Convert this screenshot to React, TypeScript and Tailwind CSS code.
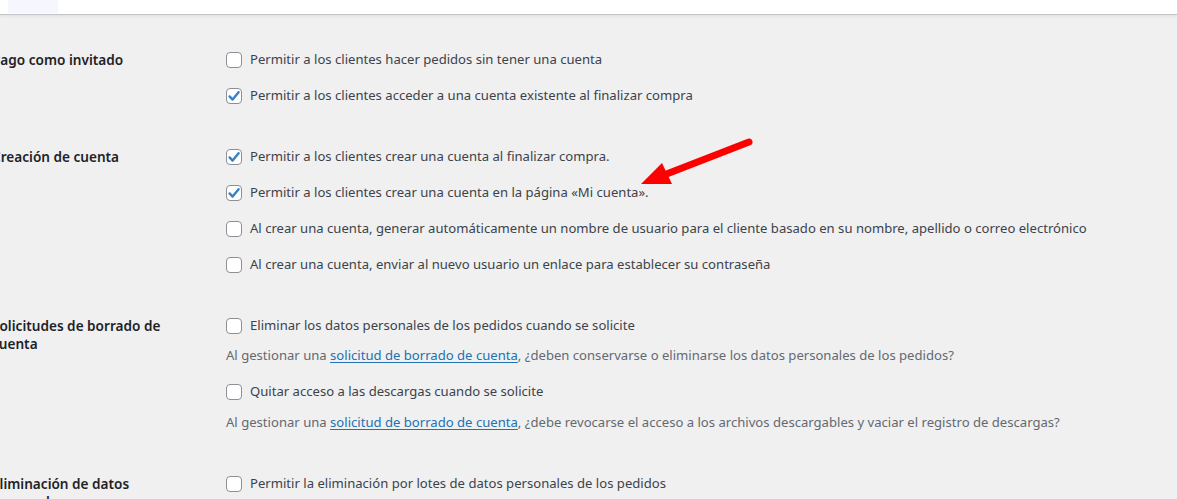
import type { ReactNode } from 'react'

function Checkbox({ checked }: { checked?: boolean }) {
  return (
    <span className="relative flex h-4 w-4 shrink-0 items-center justify-center rounded-[4px] border border-[#8c8f94] bg-white">
      {checked && (
        <svg className="absolute -left-px -top-px h-4 w-4" viewBox="0 0 16 16" aria-hidden="true">
          <path
            d="M3.6 8.4 L6.6 11.6 L12.6 4.2"
            fill="none"
            stroke="#3582c4"
            strokeWidth="2.4"
            strokeLinecap="round"
            strokeLinejoin="round"
          />
        </svg>
      )}
    </span>
  )
}

function Option({ checked, children }: { checked?: boolean; children: ReactNode }) {
  return (
    <label className="flex h-5 items-center gap-2 text-[#3c434a]">
      <Checkbox checked={checked} />
      <span className="whitespace-nowrap">{children}</span>
    </label>
  )
}

function Description({ children }: { children: ReactNode }) {
  return <p className="flex h-5 items-center whitespace-nowrap text-[#646970]">{children}</p>
}

function SettingRow({ label, children }: { label: string; children: ReactNode }) {
  return (
    <div className="flex">
      <div className="w-[234px] shrink-0 pr-[34px] pt-px text-[13.6px] font-semibold leading-[18px] text-[#1d2327]">
        {label}
      </div>
      <div className="flex flex-col">{children}</div>
    </div>
  )
}

const link = 'text-[#2271b1] underline underline-offset-2'

export default function App() {
  return (
    <div className="h-[499px] w-[1177px] overflow-hidden bg-[#f0f0f1] text-[13.1px] font-['Noto_Sans',sans-serif]">
      <div className="relative h-[15px] border-b border-[#c3c4c7] bg-white shadow-[0_1px_3px_rgba(0,0,0,0.08)]">
        <div className="ml-2 h-[13px] w-[50px] bg-[#f6f7fe]" />
      </div>

      <div className="relative -ml-2 flex flex-col gap-[41px] pt-[35px]">
        <SettingRow label="Pago como invitado">
          <div className="flex flex-col gap-4">
            <Option>Permitir a los clientes hacer pedidos sin tener una cuenta</Option>
            <Option checked>Permitir a los clientes acceder a una cuenta existente al finalizar compra</Option>
          </div>
        </SettingRow>

        <SettingRow label="Creación de cuenta">
          <div className="flex flex-col gap-4">
            <Option checked>Permitir a los clientes crear una cuenta al finalizar compra.</Option>
            <Option checked>Permitir a los clientes crear una cuenta en la página «Mi cuenta».</Option>
            <Option>
              Al crear una cuenta, generar automáticamente un nombre de usuario para el cliente basado en su nombre, apellido o correo electrónico
            </Option>
            <Option>Al crear una cuenta, enviar al nuevo usuario un enlace para establecer su contraseña</Option>
          </div>
        </SettingRow>

        <SettingRow label="Solicitudes de borrado de cuenta">
          <div className="flex flex-col">
            <Option>Eliminar los datos personales de los pedidos cuando se solicite</Option>
            <div className="mt-[10px]">
              <Description>
                Al gestionar una&nbsp;<a className={link}>solicitud de borrado de cuenta</a>, ¿deben conservarse o eliminarse los datos personales de los pedidos?
              </Description>
            </div>
            <div className="mt-4">
              <Option>Quitar acceso a las descargas cuando se solicite</Option>
            </div>
            <div className="mt-[11px]">
              <Description>
                Al gestionar una&nbsp;<a className={link}>solicitud de borrado de cuenta</a>, ¿debe revocarse el acceso a los archivos descargables y vaciar el registro de descargas?
              </Description>
            </div>
          </div>
        </SettingRow>

        <SettingRow label="Eliminación de datos personales">
          <div className="flex flex-col">
            <Option>Permitir la eliminación por lotes de datos personales de los pedidos</Option>
          </div>
        </SettingRow>
      </div>

      <svg
        className="pointer-events-none absolute left-0 top-0 h-[499px] w-[1177px]"
        viewBox="0 0 1177 499"
        aria-hidden="true"
      >
        <line x1="749" y1="142" x2="664" y2="175" stroke="#ff0000" strokeWidth="7" strokeLinecap="round" />
        <polygon points="641,184 662,163 672,184" fill="#ff0000" />
      </svg>
    </div>
  )
}
